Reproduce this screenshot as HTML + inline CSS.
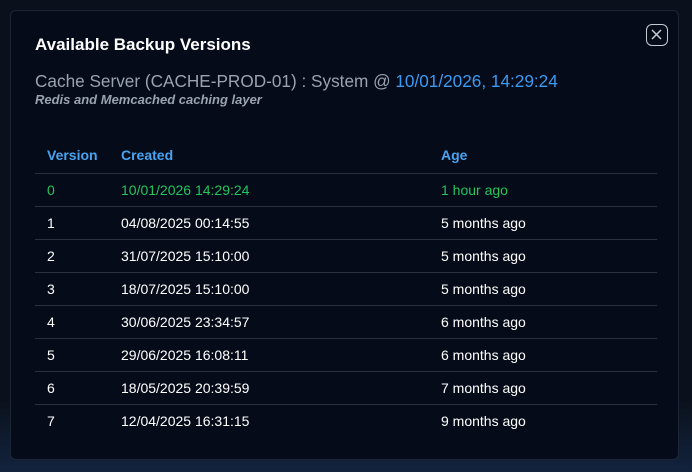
<!DOCTYPE html>
<html><head><style>
html,body{margin:0;width:692px;height:472px;overflow:hidden;background:#0a1120;font-family:"Liberation Sans",sans-serif;}
.bg{position:absolute;inset:0;background:linear-gradient(#0b111c 0,#0b111c 400px,#12233d 472px);}
.modal{position:absolute;left:10px;top:10px;width:669px;height:450px;background:#050b18;border:1px solid #1d2637;border-radius:6px;box-sizing:border-box;}
h1{position:absolute;left:24px;top:24px;margin:0;font-size:17px;font-weight:bold;color:#fff;}
.sub{position:absolute;left:24px;top:60px;font-size:17.2px;color:#9aa3b0;}
.sub span{color:#3b9af2;}
.desc{position:absolute;left:24px;top:81px;font-size:13px;font-style:italic;font-weight:bold;color:#9aa3b0;}
.close{position:absolute;left:635px;top:13px;width:22px;height:22px;border:1.5px solid #c8ccd2;border-radius:6px;box-sizing:border-box;}
table{position:absolute;left:24px;top:128px;width:622px;border-collapse:collapse;font-size:14px;color:#fff;}
td,th{padding:0 0 0 12px;height:32px;text-align:left;}
th{color:#4aa3f0;font-weight:bold;height:32px;padding-bottom:2px;}
tr{border-bottom:1px solid #2a3242;}
tr:last-child{border-bottom:none;}
.g td{color:#22c55e;}
</style></head><body>
<div class="bg"></div>
<div class="modal">
<h1>Available Backup Versions</h1>
<div class="sub">Cache Server (CACHE-PROD-01) : System @ <span>10/01/2026, 14:29:24</span></div>
<div class="desc">Redis and Memcached caching layer</div>
<div class="close"><svg width="19" height="19" viewBox="0 0 19 19"><path d="M5 5L14 14M14 5L5 14" stroke="#c8ccd2" stroke-width="1.5"/></svg></div>
<table>
<tr><th style="width:62px">Version</th><th style="width:308px">Created</th><th>Age</th></tr>
<tr class="g"><td>0</td><td>10/01/2026 14:29:24</td><td>1 hour ago</td></tr>
<tr><td>1</td><td>04/08/2025 00:14:55</td><td>5 months ago</td></tr>
<tr><td>2</td><td>31/07/2025 15:10:00</td><td>5 months ago</td></tr>
<tr><td>3</td><td>18/07/2025 15:10:00</td><td>5 months ago</td></tr>
<tr><td>4</td><td>30/06/2025 23:34:57</td><td>6 months ago</td></tr>
<tr><td>5</td><td>29/06/2025 16:08:11</td><td>6 months ago</td></tr>
<tr><td>6</td><td>18/05/2025 20:39:59</td><td>7 months ago</td></tr>
<tr><td>7</td><td>12/04/2025 16:31:15</td><td>9 months ago</td></tr>
</table>
</div>
</body></html>
